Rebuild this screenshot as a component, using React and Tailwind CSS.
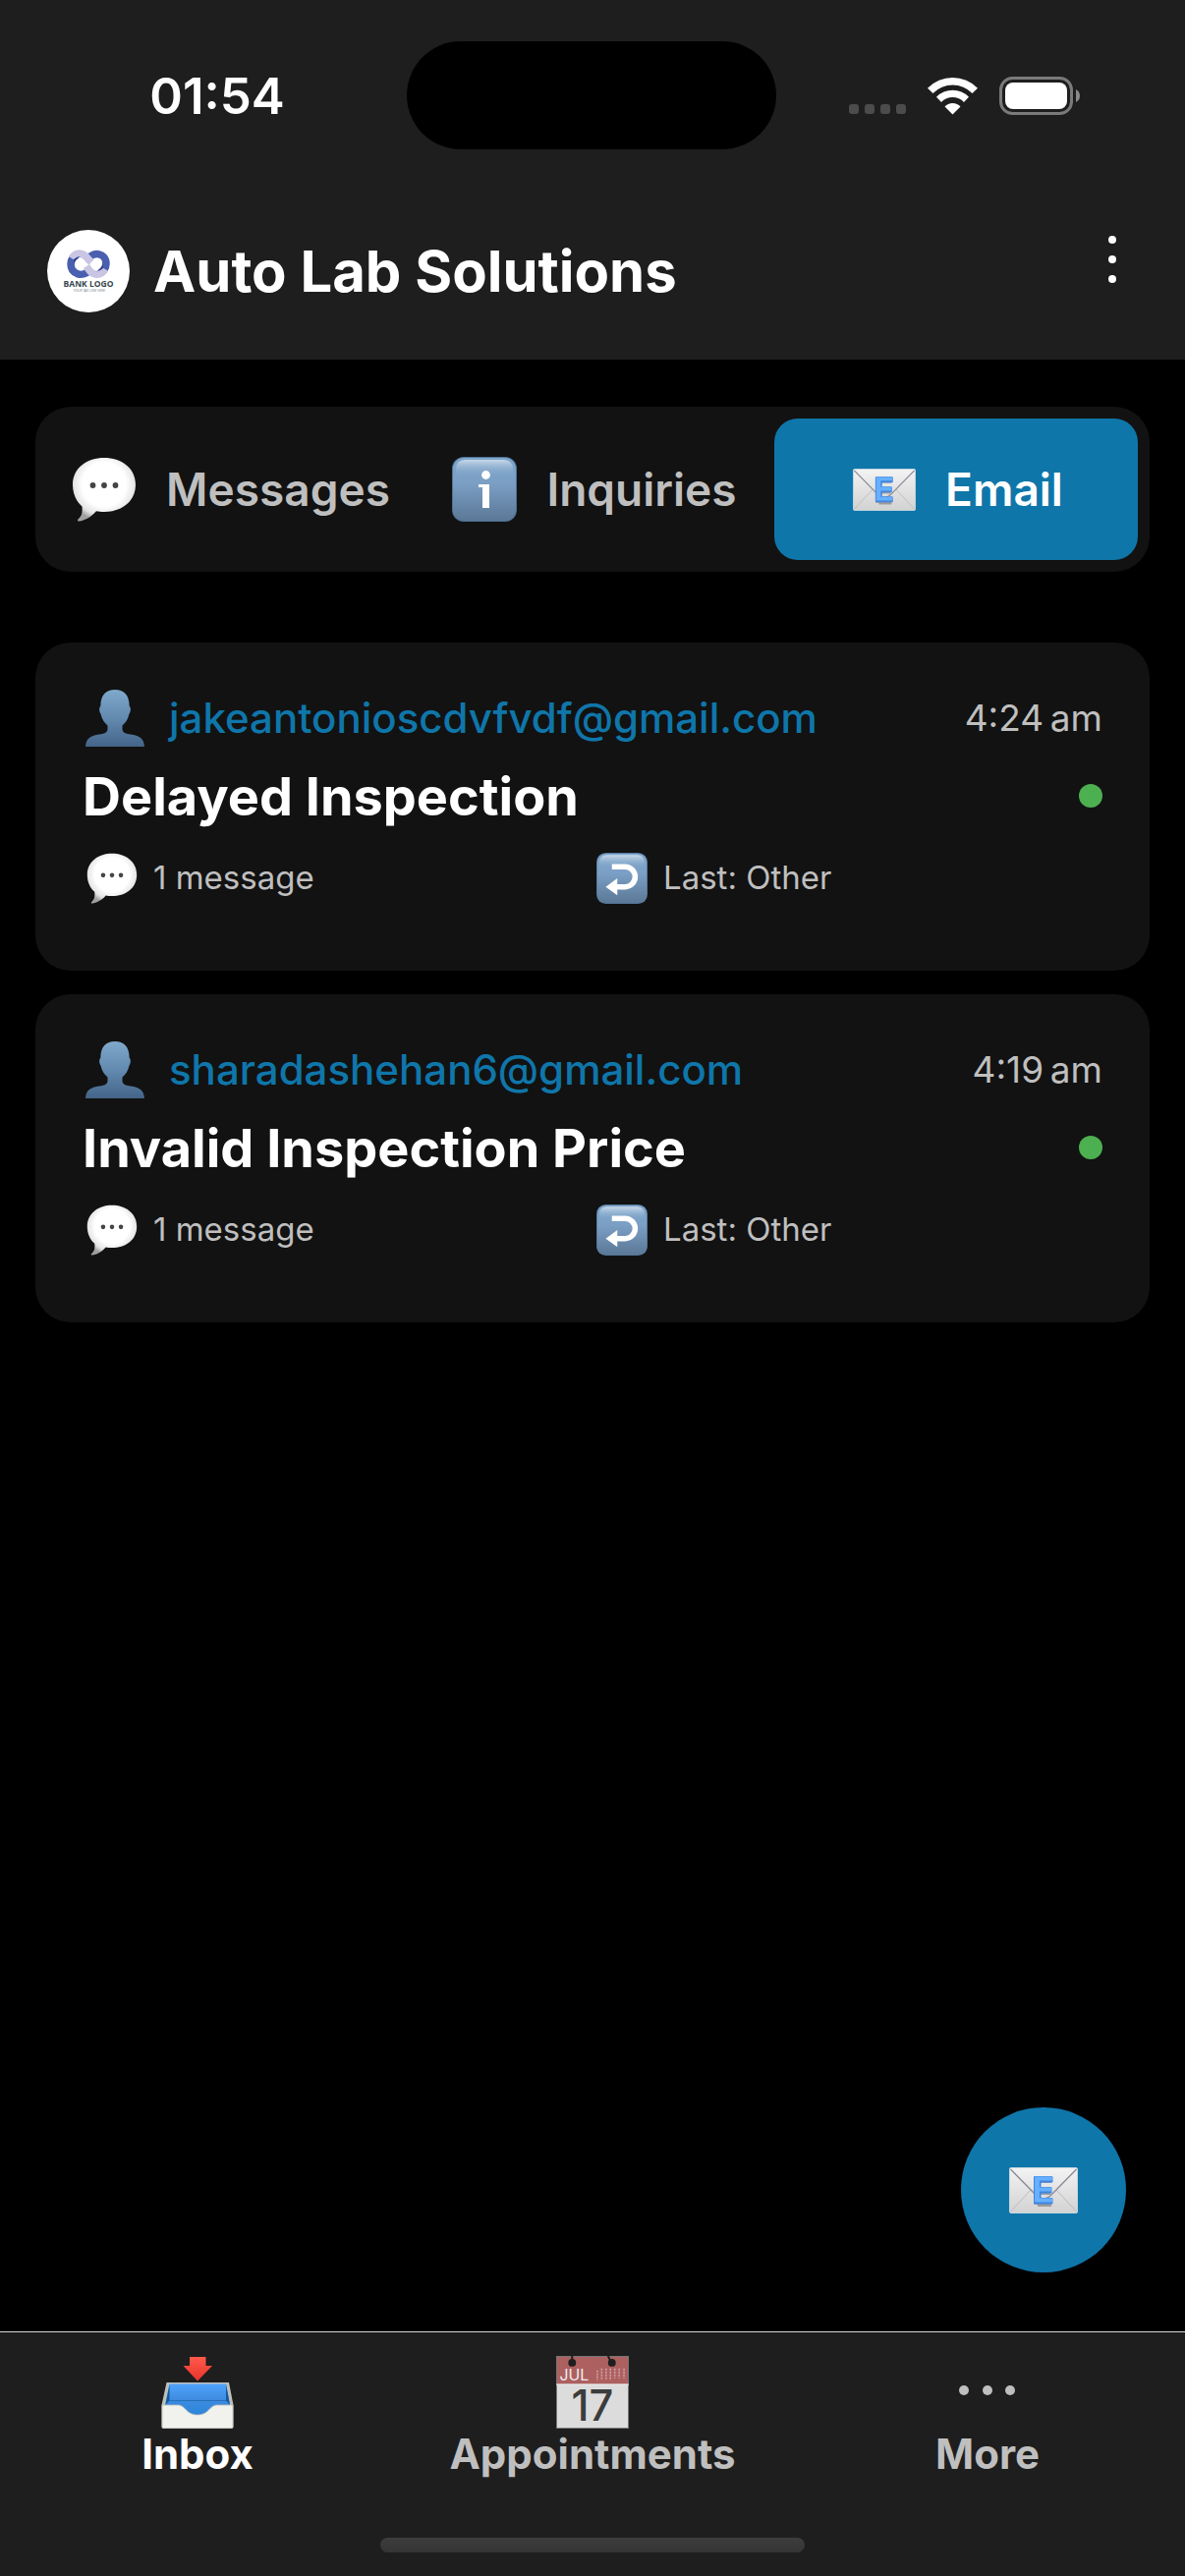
import React, { useId } from "react";

function SpeechIcon({ className }) {
  const id = useId();
  return (
    <svg viewBox="0 0 66 66" className={className} aria-hidden="true">
      <defs>
        <radialGradient id={id} cx="0.5" cy="0.42" r="0.58">
          <stop offset="0.6" stopColor="#ffffff" />
          <stop offset="0.85" stopColor="#e4e4e4" />
          <stop offset="1" stopColor="#a0a0a0" />
        </radialGradient>
      </defs>
      <path
        d="M33 1C50 1 65 11 65 28.500C65 46 50 56 33 56C30 56 27 55.700 25 55.200C20 61 13 65 7.500 65.500C5.500 65.500 5.600 64 7 63C10.500 60 11 56 10.500 50.500C4.500 45.500 1 37.500 1 28.500C1 11 16 1 33 1Z"
        fill={`url(#${id})`}
      />
      <circle cx="21.500" cy="29" r="2.900" fill="#444" />
      <circle cx="33" cy="29" r="2.900" fill="#444" />
      <circle cx="44.500" cy="29" r="2.900" fill="#444" />
    </svg>
  );
}

function BlueTile({ className, children }) {
  const id = useId();
  return (
    <svg viewBox="0 0 66 66" className={className} aria-hidden="true">
      <defs>
        <linearGradient id={id} x1="0" y1="0" x2="0" y2="1">
          <stop offset="0" stopColor="#7fa6cb" />
          <stop offset="0.4" stopColor="#7b9fc5" />
          <stop offset="1" stopColor="#5b7896" />
        </linearGradient>
        <linearGradient id={id + "g"} x1="0" y1="0" x2="0" y2="1">
          <stop offset="0" stopColor="#c8d9e9" />
          <stop offset="1" stopColor="#7fa4c8" stopOpacity="0" />
        </linearGradient>
      </defs>
      <rect width="66" height="66" rx="12" fill="#4f7296" />
      <rect x="1" y="1" width="64" height="64" rx="11" fill={`url(#${id})`} />
      <path d="M4 20V13Q4 3 14 3H52Q62 3 62 13V20Z" fill={`url(#${id}g)`} />
      {children}
    </svg>
  );
}

function InfoIcon({ className }) {
  return (
    <BlueTile className={className}>
      <circle cx="34.500" cy="18.500" r="4.400" fill="#fff" />
      <path d="M27 28H38V52H31V31H27Z" fill="#fff" />
    </BlueTile>
  );
}

function ReturnIcon({ className }) {
  return (
    <BlueTile className={className}>
      <path d="M20 18H37A13 13 0 0 1 37 44H25" fill="none" stroke="#fff" strokeWidth="7" />
      <path d="M12 44L27 33V55Z" fill="#fff" />
    </BlueTile>
  );
}

function EmailIcon({ className }) {
  const id = useId();
  return (
    <svg viewBox="0 0 70 47" className={className} aria-hidden="true">
      <defs>
        <linearGradient id={id} x1="0" y1="0" x2="0" y2="1">
          <stop offset="0" stopColor="#f3f3f3" />
          <stop offset="1" stopColor="#d2d2d2" />
        </linearGradient>
      </defs>
      <rect x="0.500" y="0.500" width="69" height="46" rx="1.500" fill={`url(#${id})`} stroke="#c4d8df" />
      <path d="M1.500 45L22 23M68.500 45L48 23" stroke="#bdbdbd" strokeWidth="1" fill="none" />
      <path d="M1.500 2L27 28Q35 36 43 28L68.500 2" stroke="#8a8d98" strokeWidth="1.400" fill="none" />
      <path d="M29 13H43M29 25H42M29 37H43M28.500 12V38" stroke="#6a6a6a" strokeOpacity="0.55" strokeWidth="6" fill="none" />
      <path d="M25.500 9.500H44V15H32V20.500H43V26H32V31.500H44V37H25.500Z" fill="#3f86e0" stroke="#3f86e0" strokeLinejoin="round" />
      <path d="M26 9.500H44V13.500H31V20.500H43V24.500H31V31.500H44V35.500H26Z" fill="#66b0ff" />
    </svg>
  );
}

function PersonIcon({ className }) {
  const id = useId();
  return (
    <svg viewBox="0 0 60 58" className={className} aria-hidden="true">
      <defs>
        <linearGradient id={id} x1="0" y1="0" x2="0" y2="1">
          <stop offset="0" stopColor="#7fa9cb" />
          <stop offset="0.5" stopColor="#638ab0" />
          <stop offset="1" stopColor="#446488" />
        </linearGradient>
      </defs>
      <path
        d="M30 0C39 0 44.500 5 44.700 17C46.500 18 46 23 44.500 24.500C43.500 30 40.500 34 37.500 36.500V40.500C38 44 41.500 45 46 45.500C54.500 46.500 59.500 49.500 60 58H0C0.500 49.500 5.500 46.500 14 45.500C18.500 45 22 44 22.500 40.500V36.500C19.500 34 16.500 30 15.500 24.500C14 23 13.500 18 15.300 17C15.500 5 21 0 30 0Z"
        fill={`url(#${id})`}
      />
    </svg>
  );
}

function InboxIcon({ className }) {
  return (
    <svg viewBox="0 0 74 74" className={className} aria-hidden="true">
      <defs>
        <linearGradient id="tray" x1="0" y1="0" x2="0" y2="1">
          <stop offset="0" stopColor="#4fa3fb" />
          <stop offset="0.5" stopColor="#3d8be0" />
          <stop offset="1" stopColor="#2a86d8" />
        </linearGradient>
        <linearGradient id="arrow" x1="0" y1="0" x2="0" y2="1">
          <stop offset="0" stopColor="#ff5a4c" />
          <stop offset="1" stopColor="#e8332b" />
        </linearGradient>
      </defs>
      <path d="M29 1H45.500V10H52L37 25.500L22.500 10H29Z" fill="url(#arrow)" />
      <path d="M5.500 27H69L73.500 50V72Q73.500 74 71.500 74H2.500Q0.500 74 0.500 72V50Z" fill="#bfbfba" />
      <path d="M8.500 28.500H66L70 50V62H4V50Z" fill="url(#tray)" />
      <path d="M8.500 28.500V45.500L4.500 49.500ZM66 28.500V45.500L70 49.500Z" fill="#12599b" />
      <path d="M8.500 45.500H66" stroke="#2470b8" strokeWidth="1" />
      <path d="M1 50H17C25 50 25 60 37 60C49 60 49 50 57 50H73V72Q73 73.500 71.500 73.500H2.500Q1 73.500 1 72Z" fill="#f1f1ee" stroke="#bdbdb8" strokeWidth="0.800" />
    </svg>
  );
}

function CalendarIcon({ className }) {
  return (
    <svg viewBox="0 0 75 75" overflow="visible" className={className} aria-hidden="true">
      <rect width="75" height="75" fill="#dcdcdc" />
      <rect width="75" height="29" fill="#ad6060" />
      <path d="M0 0.500H75M0 74.500H75M0.500 0V75M74.500 0V75" stroke="#777" strokeWidth="1" />
      <path d="M0 29.500H75" stroke="#eee" strokeWidth="1" />
      <path d="M16.500 0V6M53.500 0L56 5" stroke="#1e1e1e" strokeWidth="2" />
      <circle cx="16.500" cy="7" r="4" fill="#1e1e1e" />
      <circle cx="57.500" cy="7" r="4" fill="#1e1e1e" />
      <g stroke="#cfa0a0" strokeWidth="1.600" strokeDasharray="2 1">
        <path d="M42.500 15V25M47 13V25M51.500 13V25M56 13V25M60.500 13V23M65 13V23M70 13V23" />
      </g>
      <text x="3.500" y="25" fontFamily="Inter" fontSize="16" fontWeight="400" fill="#eee">JUL</text>
      <text x="37.500" y="67" textAnchor="middle" fontFamily="Inter" fontSize="44" fontWeight="500" fill="#3c3c3c">17</text>
    </svg>
  );
}

function MoreIcon({ className }) {
  return (
    <svg viewBox="0 0 74 74" className={className} aria-hidden="true" fill="#bfbfbf">
      <circle cx="13" cy="35" r="5" />
      <circle cx="37" cy="35" r="5" />
      <circle cx="60" cy="35" r="5" />
    </svg>
  );
}

function BankLogo() {
  return (
    <svg viewBox="0 0 84 84" className="size-[84px] shrink-0" role="img" aria-label="Bank logo">
      <circle cx="42" cy="42" r="42" fill="#fff" />
      <g fill="none" strokeWidth="7.500">
        <path d="M42 42C37 48 24 46 24 34.500C24 30 27 26.500 31 25.500" stroke="#4a5fb0" />
        <path d="M42 29C47 22 60 23 60 34.500C60 39 57 43 53 44" stroke="#4a5fb0" />
        <path d="M25 29C30 21 38 24 42 30L45 33" stroke="#c9c6e4" />
        <path d="M59 40C54 48 46 46 42 40L40 37" stroke="#c9c6e4" />
      </g>
      <path d="M27 30Q30 27 34 27Q28 30 27.500 36Z" fill="#2b3f8f" />
      <path d="M57 39Q54 42 50 42.500Q56 39 56.500 33Z" fill="#2b3f8f" />
      <text x="42" y="58" textAnchor="middle" fontFamily="Open Sans" fontWeight="700" fontSize="8.500" fill="#37474f">BANK LOGO</text>
      <text x="43" y="63" textAnchor="middle" fontFamily="Open Sans" fontStyle="italic" fontSize="3.500" fill="#78828a">YOUR TAG LINE HERE</text>
    </svg>
  );
}

function StatusBar() {
  return (
    <div className="grid grid-cols-[1fr_376px_1fr] items-center pt-[42px]">
      <div className="pl-7 text-center text-[51px] leading-none font-semibold">01:54</div>
      <div className="h-[110px] rounded-full bg-black" />
      <div className="flex items-center justify-center pl-[74px] pr-[106px]">
        <svg viewBox="0 0 236 46" className="h-[46px] w-[236px] shrink-0" aria-label="Wi-Fi on, battery full" role="img">
          <g fill="#4c4c4c">
            <rect x="0" y="32" width="10" height="10" rx="3" />
            <rect x="16" y="32" width="10" height="10" rx="3" />
            <rect x="32" y="32" width="10" height="10" rx="3" />
            <rect x="48" y="32" width="10" height="10" rx="3" />
          </g>
          <g fill="#fff">
            <path d="M80 15.700A35.700 35.700 0 0 1 131 15.700L125.500 21A28 28 0 0 0 85.500 21Z" />
            <path d="M89 24.700A23 23 0 0 1 122 24.700L117 30A15.700 15.700 0 0 0 94 30Z" />
            <path d="M97.500 34.500A10.700 10.700 0 0 1 113.500 34.500L105.500 42.500Z" />
          </g>
          <rect x="154.500" y="5.500" width="72" height="36" rx="12" fill="none" stroke="#7a7a7a" strokeWidth="3" />
          <rect x="159" y="10" width="63" height="27" rx="8" fill="#fff" />
          <path d="M231 17V30Q235 28 235 23.500Q235 19 231 17Z" fill="#8a8a8a" />
        </svg>
      </div>
    </div>
  );
}

function Header() {
  return (
    <header className="flex items-center gap-6 px-12 pt-[82px] pb-12">
      <BankLogo />
      <h1 className="flex-1 text-[58px] leading-[72px] font-bold">Auto Lab Solutions</h1>
      <button type="button" aria-label="Menu" className="flex w-13 flex-col items-center gap-3 pb-6">
        <span className="size-2 rounded-full bg-white" />
        <span className="size-2 rounded-full bg-white" />
        <span className="size-2 rounded-full bg-white" />
      </button>
    </header>
  );
}

const tabs = [
  { label: "Messages", Icon: SpeechIcon, size: "size-[66px]" },
  { label: "Inquiries", Icon: InfoIcon, size: "size-[66px]" },
  { label: "Email", Icon: EmailIcon, size: "w-16 h-[43px]", active: true },
];

function Tabs() {
  return (
    <div role="tablist" className="grid grid-cols-3 rounded-[36px] bg-[#121212] p-3">
      {tabs.map(({ label, Icon, size, active }) => (
        <button
          key={label}
          type="button"
          role="tab"
          aria-selected={Boolean(active)}
          className={
            active
              ? "flex h-36 items-center justify-center gap-[30px] rounded-3xl bg-[#0f76aa] pl-1 text-[46px] font-semibold text-white"
              : "flex h-36 items-center justify-center gap-[30px] rounded-3xl pl-1 text-[46px] font-semibold text-[#bfbfbf]"
          }
        >
          <Icon className={`${size} shrink-0`} />
          {label}
        </button>
      ))}
    </div>
  );
}

const threads = [
  { from: "jakeantonioscdvfvdf@gmail.com", time: "4:24\u202fam", subject: "Delayed Inspection" },
  { from: "sharadashehan6@gmail.com", time: "4:19\u202fam", subject: "Invalid Inspection Price" },
];

function ThreadCard({ from, time, subject }) {
  return (
    <li className="rounded-[36px] bg-[#121212] px-12 pt-12 pb-[68px]">
      <div className="flex h-[58px] items-center">
        <PersonIcon className="mx-[3px] h-[58px] w-[60px] shrink-0" />
        <a href={`mailto:${from}`} className="ml-[22px] flex-1 text-[42px] leading-[56px] font-medium text-[#0f76aa]">
          {from}
        </a>
        <time className="text-[37px] text-[#bfbfbf]">{time}</time>
      </div>
      <div className="mt-[18px] flex h-16 items-center justify-between">
        <h2 className="text-[54px] font-bold">{subject}</h2>
        <span className="size-6 rounded-full bg-[#4caf50]" />
      </div>
      <div className="mt-[26px] grid grid-cols-2 text-[33px] text-[#bfbfbf]">
        <div className="flex h-[52px] items-center gap-4 pl-1">
          <SpeechIcon className="size-[52px] shrink-0" />1 message
        </div>
        <div className="flex h-[52px] items-center gap-4 pl-1">
          <ReturnIcon className="size-[52px] shrink-0" />
          Last: Other
        </div>
      </div>
    </li>
  );
}

function BottomNav() {
  return (
    <nav className="border-t border-[#d8d8d8] bg-[#1e1e1e] py-6">
      <div className="grid grid-cols-3 text-[42px] leading-[52px] font-bold text-[#bfbfbf]">
        <a href="#inbox" aria-current="page" className="flex flex-col items-center text-white">
          <InboxIcon className="size-[74px]" />
          Inbox
        </a>
        <a href="#appointments" className="flex flex-col items-center">
          <CalendarIcon className="size-[74px]" />
          Appointments
        </a>
        <a href="#more" className="flex flex-col items-center">
          <MoreIcon className="size-[74px]" />
          More
        </a>
      </div>
      <div className="mx-auto mt-[59px] h-[15px] w-[432px] rounded-full bg-linear-to-b from-[#3d3d3d] to-[#353535]" />
    </nav>
  );
}

export default function App() {
  return (
    <div className="flex min-h-screen flex-col bg-black font-[Inter,sans-serif] text-white">
      <div className="bg-[#1e1e1e]">
        <StatusBar />
        <Header />
      </div>
      <main className="flex flex-1 flex-col px-9 pt-12 pb-[60px]">
        <Tabs />
        <ul className="mt-18 flex flex-col gap-6">
          {threads.map((t) => (
            <ThreadCard key={t.from} {...t} />
          ))}
        </ul>
        <button
          type="button"
          aria-label="Compose email"
          className="mt-auto mr-6 flex size-42 items-center justify-center self-end rounded-full bg-[#0f76aa]"
        >
          <EmailIcon className="h-[47px] w-[70px]" />
        </button>
      </main>
      <BottomNav />
    </div>
  );
}
